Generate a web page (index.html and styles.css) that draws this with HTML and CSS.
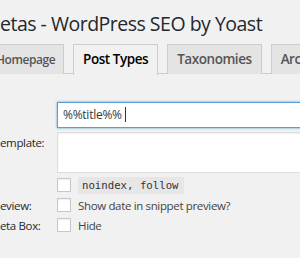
FILE: index.html
```html
<!DOCTYPE html>
<html lang="en">
<head>
  <meta charset="UTF-8" />
  <title>Titles &amp; Metas - WordPress SEO by Yoast</title>
  <link rel="stylesheet" href="styles.css">
</head>
<body>
  <div class="wrap">
    <h2 class="page-title">etas - WordPress SEO by Yoast</h2>

    <nav class="nav-tab-wrapper">
      <a class="nav-tab nav-tab-first">Homepage</a>
      <a class="nav-tab nav-tab-active">Post Types</a>
      <a class="nav-tab">Taxonomies</a>
      <a class="nav-tab">Archives</a>
    </nav>

    <div class="settings">
      <div class="row row-title">
        <label class="label"></label>
        <div class="field">
          <div class="text-input is-focused">%%title%%<span class="caret"></span></div>
        </div>
      </div>

      <div class="row row-desc">
        <label class="label">emplate:</label>
        <div class="field">
          <textarea class="textarea"></textarea>
        </div>
      </div>

      <div class="row row-check">
        <label class="label"></label>
        <div class="field">
          <input type="checkbox" class="checkbox">
          <code class="code">noindex, follow</code>
        </div>
      </div>

      <div class="row row-check">
        <label class="label">eview:</label>
        <div class="field">
          <input type="checkbox" class="checkbox">
          <span class="check-text">Show date in snippet preview?</span>
        </div>
      </div>

      <div class="row row-check">
        <label class="label">eta Box:</label>
        <div class="field">
          <input type="checkbox" class="checkbox">
          <span class="check-text">Hide</span>
        </div>
      </div>
    </div>
  </div>
</body>
</html>
```

FILE: styles.css
```css
* {
  box-sizing: border-box;
  margin: 0;
  padding: 0;
}

html, body {
  overflow: hidden;
}

body {
  background: #f1f1f1;
  color: #23282d;
  font-family: 'Open Sans', sans-serif;
  font-size: 11.5px;
}

.wrap {
  width: 300px;
}

.page-title {
  font-size: 19.5px;
  font-weight: 400;
  letter-spacing: -0.5px;
  line-height: 24px;
  padding-top: 12px;
  color: #23282d;
  white-space: nowrap;
}

/* tabs */
.nav-tab-wrapper {
  display: flex;
  margin-top: 8px;
  margin-left: -14px;
  border-bottom: 1px solid #ccc;
  height: 30px;
  white-space: nowrap;
}

.nav-tab {
  display: block;
  flex-shrink: 0;
  height: 30px;
  margin-left: 9px;
  padding: 0 9px;
  border: 1px solid #ccc;
  border-bottom: none;
  background: #e4e4e4;
  color: #555;
  font-size: 13.5px;
  font-weight: 600;
  letter-spacing: -0.45px;
  line-height: 29px;
}

.nav-tab-first {
  margin-left: 0;
  padding-right: 8px;
  font-size: 12px;
}

.nav-tab-active {
  background: #f1f1f1;
  color: #000;
  height: 31px;
}

/* form rows */
.settings {
  margin-top: 28px;
}

.row {
  display: flex;
}

.label {
  width: 57px;
  flex-shrink: 0;
  white-space: nowrap;
  overflow: hidden;
  font-size: 11.5px;
  letter-spacing: -0.35px;
  color: #23282d;
}

.field {
  display: flex;
  align-items: center;
  flex: 1;
}

.text-input {
  width: 260px;
  height: 26px;
  padding: 0 5px;
  background: #fff;
  border: 1px solid #5b9dd9;
  box-shadow: 0 0 2px rgba(30, 140, 190, 0.8);
  font-size: 12px;
  letter-spacing: -0.25px;
  line-height: 24px;
  color: #32373c;
  white-space: nowrap;
}

.caret {
  display: inline-block;
  width: 1px;
  height: 15px;
  margin-left: 3px;
  vertical-align: -3px;
  background: #333;
}

.row-desc {
  margin-top: 4px;
}

.row-desc .label {
  padding-top: 3px;
}

.textarea {
  display: block;
  width: 260px;
  height: 41px;
  background: #fff;
  border: 1px solid #ddd;
  box-shadow: inset 0 1px 2px rgba(0, 0, 0, 0.07);
  resize: none;
}

.row-check {
  height: 20px;
  align-items: center;
}

.row-desc + .row-check {
  margin-top: 2px;
}

.checkbox {
  appearance: none;
  -webkit-appearance: none;
  width: 14px;
  height: 14px;
  margin-right: 7px;
  background: #fff;
  border: 1px solid #c8c8c8;
  box-shadow: inset 0 1px 2px rgba(0, 0, 0, 0.07);
  flex-shrink: 0;
}

.code {
  display: inline-block;
  height: 17px;
  padding: 0 5px 0 4px;
  background: #e6e6e6;
  font-family: 'DejaVu Sans Mono', monospace;
  font-size: 10.7px;
  line-height: 17px;
  color: #333;
}

.check-text {
  font-size: 11.5px;
  letter-spacing: -0.35px;
  color: #444;
}
```
